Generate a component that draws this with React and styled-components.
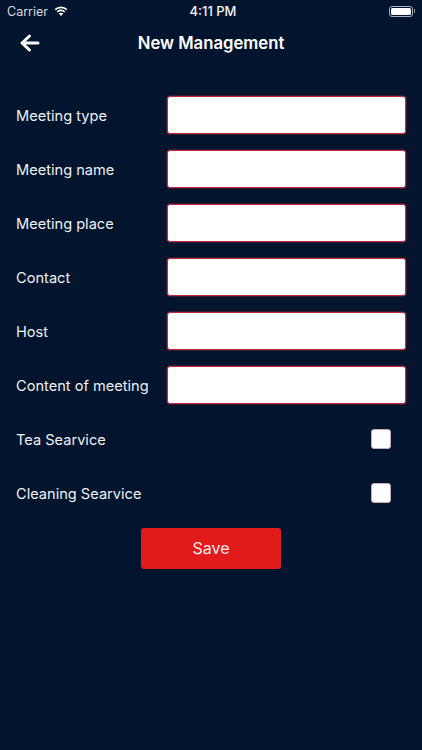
import React from "react";
import styled, { createGlobalStyle } from "styled-components";

const Global = createGlobalStyle`
  html, body { margin: 0; padding: 0; background: #03142e; }
  * { box-sizing: border-box; }
`;
const Page = styled.div`
  width: 422px; height: 750px; background: #03142e; color: #fff;
  font-family: Inter, "Liberation Sans", sans-serif; overflow: hidden;
`;
const StatusBar = styled.div`
  height: 22px; padding: 0 7px; display: grid; grid-template-columns: 1fr auto 1fr; align-items: center;
  font-size: 12.5px; color: #f2f3f5;
`;
const Carrier = styled.div`display: flex; align-items: center; gap: 6px; font-weight: 400; color: #d9dce1;`;
const Time = styled.div`font-weight: 500; font-size: 13px; padding-left: 4px;`;
const BatteryWrap = styled.div`justify-self: end; display: flex; align-items: center; gap: 1px;`;
const Battery = styled.div`
  width: 24px; height: 11px; border: 1px solid #aab0ba; border-radius: 3px; padding: 1px;
  &::after { content: ""; display: block; height: 100%; background: #fff; border-radius: 1.5px; }
`;
const Nub = styled.div`width: 1px; height: 4px; background: #8f96a2;`;
const NavBar = styled.div`
  height: 42px; position: relative; display: flex; align-items: center; justify-content: center;
`;
const Title = styled.h1`margin: 0; font-size: 16.7px; font-weight: 600; letter-spacing: 0;`;
const Back = styled.button`
  position: absolute; left: 19px; top: 9px; padding: 0; border: 0; background: none; display: flex;
`;
const Form = styled.div`
  padding: 32px 16px 0; display: flex; flex-direction: column; gap: 16px;
`;
const Row = styled.div`
  height: 38px; display: grid; grid-template-columns: 151px 1fr; align-items: center;
`;
const Label = styled.label`font-size: 14.6px; color: #eef0f3; padding-top: 1px;`;
const Input = styled.input`
  width: 100%; height: 38px; background: #fff; border: 1.5px solid #bd2a3c; border-radius: 3px; outline: 0;
  box-shadow: 0 0 0 0.5px rgba(189, 42, 60, 0.6);
`;
const CheckRow = styled.div`
  height: 38px; display: flex; align-items: center; justify-content: space-between; padding-right: 15px;
`;
const Check = styled.input.attrs({ type: "checkbox" })`
  appearance: none; width: 20px; height: 20px; margin: 0; background: #fff;
  border: 1px solid #c9a9b4; border-radius: 3px;
`;
const Actions = styled.div`display: flex; justify-content: center;`;
const Save = styled.button`
  width: 140px; height: 41px; padding: 0 0 2px; border: 0; border-radius: 3px; background: #e11b1c; color: #f7eaea;
  font: 400 16px Inter, "Liberation Sans", sans-serif;
`;

const fields = ["Meeting type", "Meeting name", "Meeting place", "Contact", "Host", "Content of meeting"];
const checks = ["Tea Searvice", "Cleaning Searvice"];

export default function App() {
  return (
    <Page>
      <Global />
      <StatusBar>
        <Carrier>
          Carrier
          <svg width="14" height="11" viewBox="0 0 14 11" fill="#fff">
            <path d="M7 2.2c2 0 3.9.8 5.3 2.1l1.1-1.2A9.4 9.4 0 0 0 7 .5 9.4 9.4 0 0 0 .6 3.1l1.1 1.2A7.7 7.7 0 0 1 7 2.2z" />
            <path d="M7 5.3c1.2 0 2.3.4 3.1 1.2l1.2-1.2A6.3 6.3 0 0 0 7 3.6c-1.7 0-3.2.6-4.3 1.7l1.2 1.2A4.6 4.6 0 0 1 7 5.3z" />
            <path d="M7 6.8c-.9 0-1.6.3-2.2.8L7 10l2.2-2.4c-.6-.5-1.3-.8-2.2-.8z" />
          </svg>
        </Carrier>
        <Time>4:11 PM</Time>
        <BatteryWrap><Battery /><Nub /></BatteryWrap>
      </StatusBar>
      <NavBar>
        <Back aria-label="Back">
          <svg width="22" height="24" viewBox="0 0 22 24" fill="none" stroke="#fff" strokeWidth="3" strokeLinecap="round" strokeLinejoin="round">
            <path d="M3 12h16M10.5 5L3 12l7.5 7" />
          </svg>
        </Back>
        <Title>New Management</Title>
      </NavBar>
      <Form>
        {fields.map((f) => (
          <Row key={f}><Label>{f}</Label><Input /></Row>
        ))}
        {checks.map((c) => (
          <CheckRow key={c}><Label>{c}</Label><Check /></CheckRow>
        ))}
        <Actions><Save>Save</Save></Actions>
      </Form>
    </Page>
  );
}
